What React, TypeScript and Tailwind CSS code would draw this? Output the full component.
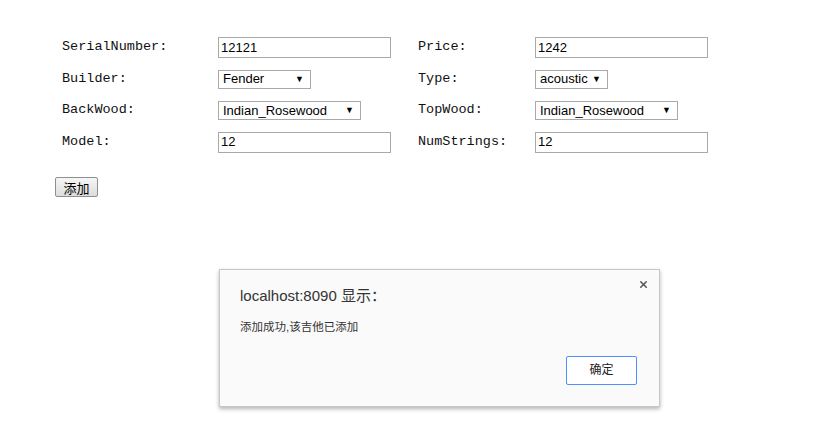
import { X } from "lucide-react";

const mono = { fontFamily: '"Liberation Mono", "Noto Sans CJK SC", monospace' };

function TextBox({ value }: { value: string }) {
  return (
    <div className="w-[173px] h-[21px] border border-[#a9a9a9] bg-white px-[2px] flex items-center text-[13px] text-black font-['Liberation_Sans',sans-serif]">
      {value}
    </div>
  );
}

function Select({ value, width }: { value: string; width: string }) {
  return (
    <div
      className={`${width} h-[19px] border border-[#a9a9a9] bg-white pl-[4px] pr-[6px] flex items-center justify-between text-[13px] text-black font-['Liberation_Sans',sans-serif]`}
    >
      <span>{value}</span>
      <span className="text-[9px] leading-none">▼</span>
    </div>
  );
}

function Label({ text }: { text: string }) {
  return (
    <div className="text-[13.5px] text-[#111]" style={mono}>
      {text}
    </div>
  );
}

export default function App() {
  return (
    <div className="relative w-[818px] h-[433px] bg-white overflow-hidden">
      <div className="pl-[62px] pt-[37px]">
        <div className="grid grid-cols-[156px_200px_117px_173px] auto-rows-[21px] gap-y-[10.5px] items-center">
          <Label text="SerialNumber:" />
          <TextBox value="12121" />
          <Label text="Price:" />
          <TextBox value="1242" />

          <Label text="Builder:" />
          <Select value="Fender" width="w-[93px]" />
          <Label text="Type:" />
          <Select value="acoustic" width="w-[73px]" />

          <Label text="BackWood:" />
          <Select value="Indian_Rosewood" width="w-[143px]" />
          <Label text="TopWood:" />
          <Select value="Indian_Rosewood" width="w-[143px]" />

          <Label text="Model:" />
          <TextBox value="12" />
          <Label text="NumStrings:" />
          <TextBox value="12" />
        </div>
      </div>

      <div className="pl-[55px] pt-[22px]">
        <button className="h-[20px] w-[43px] border border-[#8f8f8f] rounded-[2px] bg-gradient-to-b from-[#f6f6f6] to-[#dddddd] text-[13px] text-black leading-none font-['Noto_Sans_CJK_SC',sans-serif]">
          添加
        </button>
      </div>

      {/* alert dialog */}
      <div className="absolute left-[219px] top-[269px] w-[441px] h-[138px] bg-[#fafafa] border border-[#c8c8c8] shadow-[0_2px_4px_rgba(0,0,0,0.3)] font-['Liberation_Sans','Noto_Sans_CJK_SC',sans-serif]">
        <X className="absolute right-[10px] top-[9px] w-[11px] h-[11px] text-[#5a5a5a]" strokeWidth={3.5} />
        <div className="pl-[20px] pt-[15px] text-[15px] text-[#333]">localhost:8090 显示：</div>
        <div className="pl-[20px] pt-[11px] text-[11.5px] text-[#333]">添加成功,该吉他已添加</div>
        <div className="flex justify-end pr-[22px] pt-[20px]">
          <button className="w-[71px] h-[29px] bg-white border border-[#4d90fe] rounded-[2px] text-[12px] text-[#222]">
            确定
          </button>
        </div>
      </div>
    </div>
  );
}
